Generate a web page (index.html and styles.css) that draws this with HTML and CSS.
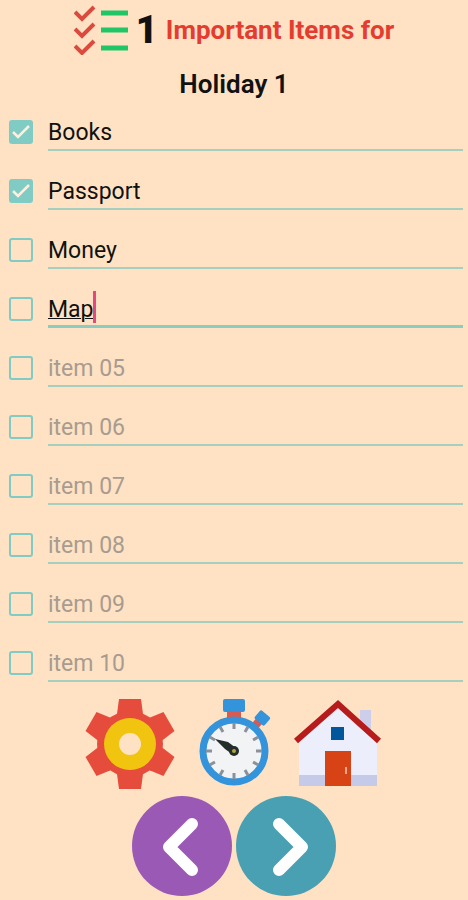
FILE: index.html
```html
<!DOCTYPE html>
<html lang="en">
<head>
  <meta charset="UTF-8">
  <meta name="viewport" content="width=device-width, initial-scale=1">
  <title>Important Items</title>
  <link rel="stylesheet" href="styles.css">
</head>
<body>
  <header>
    <h1>
      <svg class="logo" viewBox="0 0 54 50" aria-hidden="true">
        <g fill="none" stroke="#dc4a3e" stroke-width="4">
          <path d="M1 7l7 7L20 2"/>
          <path d="M1 24l7 7 12-12"/>
          <path d="M1 41l7 7 12-12"/>
        </g>
        <path d="M27 8h27M27 25h27M27 43h27" stroke="#20c565" stroke-width="5"/>
      </svg>
      <span class="number">1</span>
      <span class="title">Important Items for</span>
    </h1>
    <h2>Holiday 1</h2>
  </header>

  <main>
    <form>
      <ul class="items">
        <li><input type="checkbox" aria-label="Item 1 done" checked><input type="text" aria-label="Item 1" placeholder="item 01" value="Books"></li>
        <li><input type="checkbox" aria-label="Item 2 done" checked><input type="text" aria-label="Item 2" placeholder="item 02" value="Passport"></li>
        <li><input type="checkbox" aria-label="Item 3 done"><input type="text" aria-label="Item 3" placeholder="item 03" value="Money"></li>
        <li class="active"><input type="checkbox" aria-label="Item 4 done"><input type="text" aria-label="Item 4" placeholder="item 04" value="Map"><span class="caret"></span></li>
        <li><input type="checkbox" aria-label="Item 5 done"><input type="text" aria-label="Item 5" placeholder="item 05"></li>
        <li><input type="checkbox" aria-label="Item 6 done"><input type="text" aria-label="Item 6" placeholder="item 06"></li>
        <li><input type="checkbox" aria-label="Item 7 done"><input type="text" aria-label="Item 7" placeholder="item 07"></li>
        <li><input type="checkbox" aria-label="Item 8 done"><input type="text" aria-label="Item 8" placeholder="item 08"></li>
        <li><input type="checkbox" aria-label="Item 9 done"><input type="text" aria-label="Item 9" placeholder="item 09"></li>
        <li><input type="checkbox" aria-label="Item 10 done"><input type="text" aria-label="Item 10" placeholder="item 10"></li>
      </ul>
    </form>
  </main>

  <footer>
    <div class="tools">
      <button type="button" aria-label="Settings">
        <svg viewBox="0 0 90 92">
          <g fill="#e64c3c">
            <circle cx="45" cy="46" r="33"/>
            <path id="tooth" d="M34 1h22l2 15v17H32V16z"/>
            <use href="#tooth" transform="rotate(60 45 46)"/>
            <use href="#tooth" transform="rotate(120 45 46)"/>
            <use href="#tooth" transform="rotate(180 45 46)"/>
            <use href="#tooth" transform="rotate(240 45 46)"/>
            <use href="#tooth" transform="rotate(300 45 46)"/>
          </g>
          <circle cx="45" cy="46" r="26" fill="#f0c40f"/>
          <circle cx="45" cy="46" r="11" fill="#ffe2c4"/>
        </svg>
      </button>
      <button type="button" aria-label="Timer">
        <svg viewBox="0 0 90 92">
          <path d="M38 12h14v10H38z" fill="#d85a50"/>
          <rect x="34" y="1" width="22" height="13" rx="2" fill="#3394dc"/>
          <g transform="rotate(40 45 53)">
            <path d="M41 11h8v10h-8z" fill="#d85a50"/>
            <rect x="39" y="4" width="13" height="11" rx="2" fill="#3394dc"/>
          </g>
          <circle cx="45" cy="53" r="31" fill="#f1f3f5" stroke="#3394dc" stroke-width="7"/>
          <g stroke="#8b9199" stroke-width="3">
            <path id="ticks" d="M45 25v6M45 75v6"/>
            <use href="#ticks" transform="rotate(30 45 53)"/>
            <use href="#ticks" transform="rotate(60 45 53)"/>
            <use href="#ticks" transform="rotate(90 45 53)"/>
            <use href="#ticks" transform="rotate(120 45 53)"/>
            <use href="#ticks" transform="rotate(150 45 53)"/>
          </g>
          <path d="M26 41l13 3 8 6-4 6-7-5z" fill="#222d2c"/>
          <circle cx="45" cy="53" r="5" fill="#222d2c"/>
          <circle cx="45" cy="53" r="2" fill="#b9a33c"/>
        </svg>
      </button>
      <button type="button" aria-label="Home">
        <svg viewBox="0 0 90 92">
          <path d="M67 12h11v30H67z" fill="#cdcfea"/>
          <path d="M6 44L45 6l39 38v43H6z" fill="#eceffb"/>
          <path d="M6 77h78v11H6z" fill="#c5cae9"/>
          <path d="M3 43L45 6l41 37" fill="none" stroke="#b71c1c" stroke-width="6"/>
          <path d="M38 29h13v13H38z" fill="#01579b"/>
          <path d="M32 53h26v35H32z" fill="#d84315"/>
          <path d="M53 69v7" stroke="#f6a68c" stroke-width="2"/>
        </svg>
      </button>
    </div>
    <nav class="pager">
      <button type="button" class="prev" aria-label="Previous list">
        <svg viewBox="0 0 100 100"><path d="M60 28L37 51l23 23"/></svg>
      </button>
      <button type="button" class="next" aria-label="Next list">
        <svg viewBox="0 0 100 100"><path d="M43 28l23 23-23 23"/></svg>
      </button>
    </nav>
  </footer>
</body>
</html>
```

FILE: styles.css
```css
* {
  box-sizing: border-box;
}
body {
  margin: 0;
  background: #ffe2c4;
  color: #111;
  font-family: Roboto, sans-serif;
}
h1, h2 {
  margin: 0;
  font-size: 26px;
}
h1 {
  display: flex;
  justify-content: center;
  align-items: center;
  height: 60px;
}
.logo {
  width: 54px;
  height: 50px;
  margin-right: 8px;
}
.number {
  margin-right: 8px;
  font-size: 38px;
  font-weight: 900;
}
.title {
  color: #e53c30;
  font-weight: 700;
}
h2 {
  height: 42px;
  line-height: 48px;
  text-align: center;
  font-weight: 600;
}
.items {
  list-style: none;
  margin: 0;
  padding: 0 5px 0 9px;
}
.items li {
  position: relative;
  display: flex;
  align-items: center;
  gap: 15px;
  height: 59px;
}
input[type="checkbox"] {
  appearance: none;
  flex: none;
  width: 24px;
  height: 24px;
  margin: 0;
  border: 2px solid #80cbc4;
  border-radius: 3px;
}
input[type="checkbox"]:checked {
  background: #80cbc4 url("data:image/svg+xml,%3Csvg xmlns='http://www.w3.org/2000/svg' viewBox='0 0 20 20'%3E%3Cpath d='M2 10l5 5L18 4' fill='none' stroke='%23ffeedd' stroke-width='2.5'/%3E%3C/svg%3E") center no-repeat;
}
input[type="text"] {
  flex: 1;
  min-width: 0;
  height: 38px;
  padding: 4px 0 0;
  border: 0;
  border-bottom: 2px solid #a5d0bf;
  background: none;
  color: #111;
  font: 23px Roboto, sans-serif;
  outline: none;
}
input::placeholder {
  color: #a89b8f;
  opacity: 1;
}
.active input[type="text"] {
  border-bottom: 3px solid #8accbf;
  text-decoration: underline;
  text-decoration-thickness: 1px;
}
.caret {
  position: absolute;
  left: 84px;
  top: 12px;
  width: 3px;
  height: 32px;
  background: #e5487e;
}
button {
  padding: 0;
  border: 0;
  background: none;
  cursor: pointer;
}
button svg {
  display: block;
  width: 100%;
}
.tools {
  display: flex;
  justify-content: center;
  gap: 14px;
  padding-top: 6px;
}
.tools button {
  width: 90px;
}
.pager {
  display: flex;
  justify-content: center;
  gap: 4px;
  padding: 6px 0 2px;
}
.pager button {
  width: 100px;
  height: 100px;
  border-radius: 50%;
}
.pager path {
  fill: none;
  stroke: #fff;
  stroke-width: 12;
  stroke-linecap: round;
  stroke-linejoin: round;
}
.prev {
  background: #9b59b6;
}
.next {
  background: #48a0b2;
}
```
